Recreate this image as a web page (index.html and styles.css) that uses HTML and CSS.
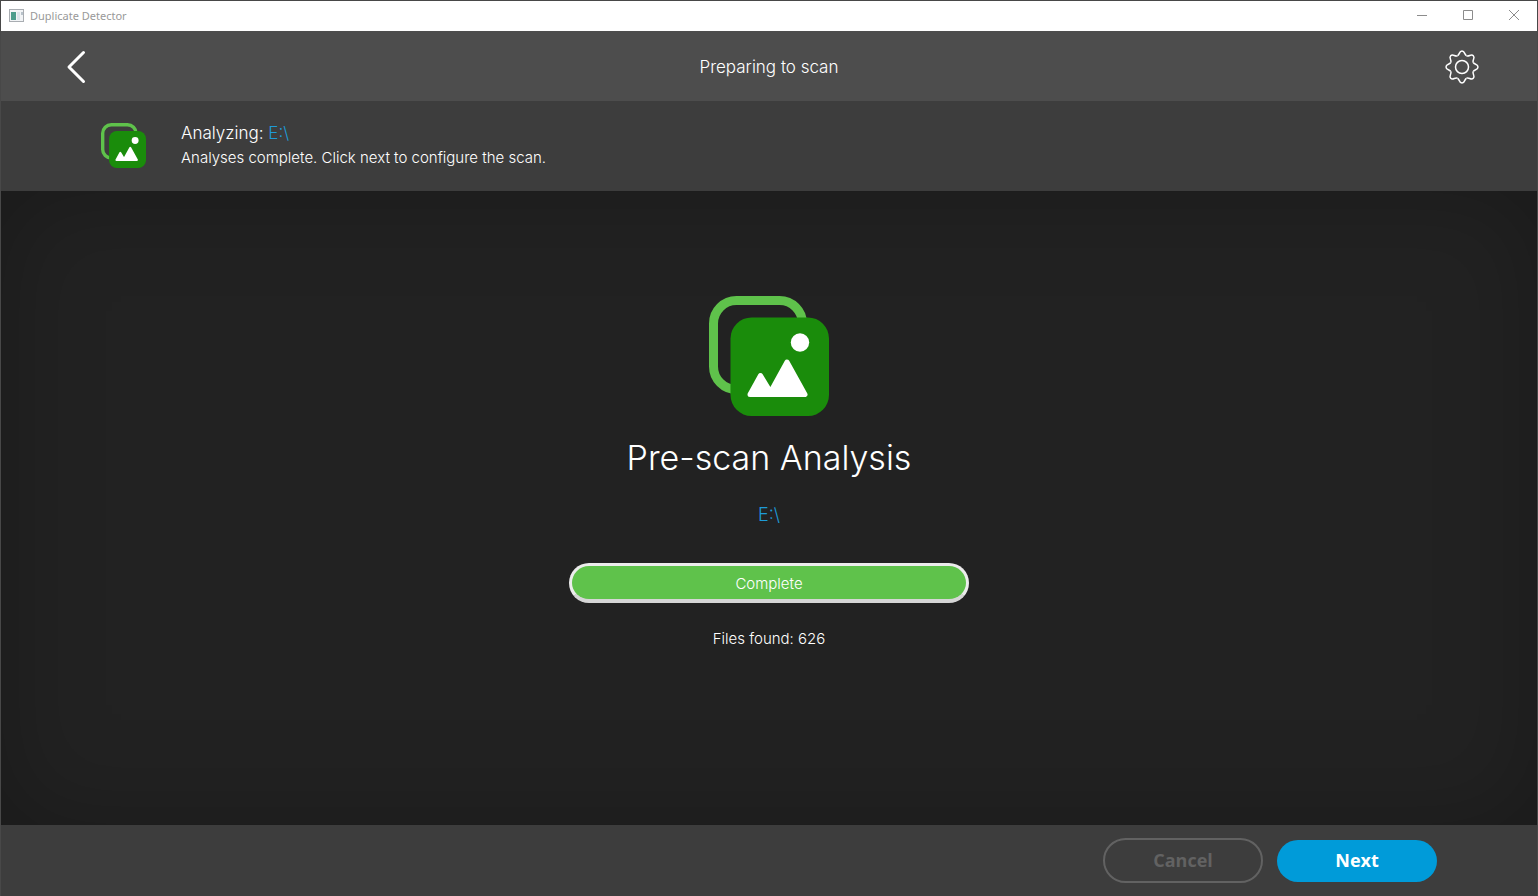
FILE: index.html
```html
<!DOCTYPE html>
<html lang="en">
<head>
<meta charset="utf-8">
<title>Duplicate Detector</title>
<link rel="stylesheet" href="styles.css">
</head>
<body>
<svg class="defs" aria-hidden="true">
  <symbol id="photos" viewBox="0 0 120 120">
    <rect x="4.5" y="4.5" width="89" height="89" rx="23" fill="none" stroke="#5fc24b" stroke-width="9"/>
    <rect x="21.500" y="21.500" width="98.500" height="98.500" rx="21" fill="#1a8c0b"/>
    <circle cx="91" cy="46.500" r="9.200" fill="#fff"/>
    <path d="M41 98.500 L51.500 79.500 L61.500 96 L78 66 L96 98.500 Z" fill="#fff" stroke="#fff" stroke-width="5" stroke-linejoin="round"/>
  </symbol>
</svg>
<div class="window">
  <div class="titlebar">
    <svg class="app-icon" width="16" height="14" viewBox="0 0 16 14" aria-hidden="true">
      <rect x="0.5" y="0.5" width="14" height="12" fill="#f2f4f6" stroke="#a9adb2"/>
      <rect x="2" y="3" width="5" height="8" fill="#4c9c8c"/>
      <rect x="8" y="3" width="3" height="8" fill="#dbe4ea"/>
      <rect x="12" y="3" width="2" height="3" fill="#b8c2ca"/>
    </svg>
    <span class="app-name">Duplicate Detector</span>
    <button class="win-btn" aria-label="Minimize"><svg width="12" height="12" viewBox="0 0 12 12"><path d="M1 5.500H11"/></svg></button>
    <button class="win-btn" aria-label="Maximize"><svg width="12" height="12" viewBox="0 0 12 12"><path d="M1.500 0.500h9v9h-9z"/></svg></button>
    <button class="win-btn" aria-label="Close"><svg width="12" height="12" viewBox="0 0 12 12"><path d="M1 0L11 10M11 0L1 10"/></svg></button>
  </div>
  <header class="topbar">
    <button class="icon-btn" aria-label="Back">
      <svg width="36" height="36" viewBox="0 0 36 36"><path d="M25.500 3.500L11 18L25.500 32.500" fill="none" stroke="#fff" stroke-width="3" stroke-linecap="round" stroke-linejoin="round"/></svg>
    </button>
    <h1 class="page-title">Preparing to scan</h1>
    <button class="icon-btn" aria-label="Settings">
      <svg width="36" height="36" viewBox="-18 -18 36 36">
        <g fill="none" stroke="#fff" stroke-width="1.500">
          <circle r="6.500"/>
          <g id="half">
            <g id="pair">
              <path id="lobe" d="M-4.600-11.200C-2.100-12.200-3.200-16 0-16C3.200-16 2.100-12.200 4.600-11.200"/>
              <use href="#lobe" transform="rotate(45)"/>
            </g>
            <use href="#pair" transform="rotate(90)"/>
          </g>
          <use href="#half" transform="rotate(180)"/>
        </g>
      </svg>
    </button>
  </header>
  <section class="status">
    <svg class="status-icon" aria-hidden="true"><use href="#photos"/></svg>
    <div>
      <p class="status-title">Analyzing: <span class="path">E:\</span></p>
      <p class="status-text">Analyses complete. Click next to configure the scan.</p>
    </div>
  </section>
  <main class="content">
    <svg class="hero-icon" aria-hidden="true"><use href="#photos"/></svg>
    <h2 class="hero-title">Pre-scan Analysis</h2>
    <p class="hero-path path">E:\</p>
    <div class="progress" role="progressbar" aria-label="Pre-scan progress" aria-valuenow="100" aria-valuemin="0" aria-valuemax="100">Complete</div>
    <p class="found">Files found: 626</p>
  </main>
  <footer class="footer">
    <button class="btn cancel" disabled>Cancel</button>
    <button class="btn next">Next</button>
  </footer>
</div>
</body>
</html>
```
FILE: styles.css
```css
* { box-sizing: border-box; }
body, h1, h2, p { margin: 0; }
body {
  font-family: Inter, "Liberation Sans", sans-serif;
  font-weight: 300;
  color: #fff;
}
button { padding: 0; border: 0; background: none; font: inherit; }
svg { display: block; }
.defs { position: absolute; width: 0; height: 0; }
.window {
  display: flex;
  flex-direction: column;
  min-height: 100vh;
  border: 1px solid #484848;
  border-bottom: 0;
  background: #222;
}
.titlebar {
  display: flex;
  align-items: center;
  height: 30px;
  padding-left: 8px;
  background: #fff;
}
.app-name {
  flex: 1;
  margin-left: 5px;
  font: 400 11px/16px "Noto Sans", sans-serif;
  color: #999;
}
.win-btn { display: grid; place-items: center; width: 46px; height: 30px; }
.win-btn svg { fill: none; stroke: #8c8c8c; stroke-width: 1; }
.topbar {
  display: flex;
  align-items: center;
  justify-content: space-between;
  height: 70px;
  padding: 2px 57px 0;
  background: #4d4d4d;
}
.page-title { font-size: 17px; line-height: 24px; font-weight: 300; }
.status {
  display: flex;
  gap: 35px;
  height: 90px;
  padding: 20px 100px;
  background: #3d3d3d;
}
.status-icon { width: 45px; height: 45px; margin-top: 2px; }
.status-title { font-size: 17px; line-height: 24px; }
.status-text { font-size: 15px; line-height: 26px; }
.path { color: #1e9bd7; }
.content {
  flex: 1;
  display: flex;
  flex-direction: column;
  align-items: center;
  padding: 105px 20px 20px;
  box-shadow: inset 0 0 100px rgba(0, 0, 0, 0.25);
}
.hero-icon { width: 120px; height: 120px; }
.hero-title { margin-top: 18px; font-size: 34px; line-height: 48px; font-weight: 300; }
.hero-path { margin-top: 21px; font-size: 18px; line-height: 24px; }
.progress {
  width: 400px;
  max-width: 100%;
  height: 40px;
  margin-top: 36px;
  border: 3px solid #ececec;
  border-bottom: 4px solid #d6d6d6;
  border-radius: 20px;
  background: #5fc24b;
  font-size: 15px;
  line-height: 36px;
  text-align: center;
}
.found { margin-top: 24px; font-size: 15px; line-height: 24px; }
.footer {
  display: flex;
  align-items: center;
  justify-content: flex-end;
  gap: 14px;
  height: 71px;
  padding-right: 100px;
  background: #3d3d3d;
}
.btn {
  width: 160px;
  padding-bottom: 2px;
  border-radius: 23px;
  font: 700 18px/24px "Open Sans", sans-serif;
}
.cancel { height: 45px; border: 2px solid #626262; color: #626262; }
.next { height: 42px; background: #009bd9; color: #fff; }
```
